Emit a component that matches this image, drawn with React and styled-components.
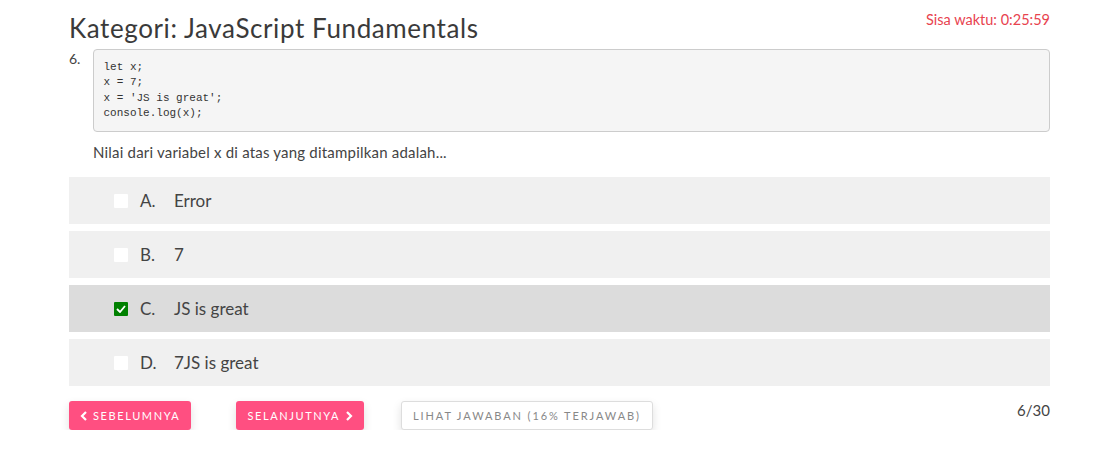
import React from "react";
import styled, { createGlobalStyle } from "styled-components";

const Global = createGlobalStyle`
  body {
    margin: 0;
    background: #fff;
    font-family: "Lato", "Noto Sans", sans-serif;
    color: #444;
  }
`;

const Page = styled.div`
  width: 981px;
  margin-left: 69px;
  padding-top: 10px;
`;

const Header = styled.div`
  display: flex;
  justify-content: space-between;
  align-items: flex-start;
  height: 39px;
`;

const Title = styled.h1`
  margin: 0;
  font-size: 26px;
  font-weight: 400;
  letter-spacing: 0.6px;
  color: #3a3a3a;
  line-height: 36px;
`;

const Timer = styled.div`
  color: #e8434f;
  font-size: 14.5px;
  margin-top: 1px;
`;

const QuestionRow = styled.div`
  display: grid;
  grid-template-columns: 24px 1fr;
`;

const Number = styled.div`
  font-size: 14px;
  padding-top: 1px;
  color: #444;
`;

const Code = styled.pre`
  margin: 0;
  padding: 9.5px;
  background: #f5f5f5;
  border: 1px solid #ccc;
  border-radius: 4px;
  font-family: "Liberation Mono", monospace;
  font-size: 11px;
  line-height: 15.5px;
  color: #333;
`;

const Prompt = styled.p`
  margin: 11px 0 16px;
  font-size: 15px;
  letter-spacing: 0.2px;
  color: #444;
`;

const Options = styled.div`
  display: flex;
  flex-direction: column;
  gap: 7px;
`;

const Option = styled.label`
  display: flex;
  align-items: center;
  height: 47px;
  padding-left: 45px;
  background: ${(p) => (p.$active ? "#dcdcdc" : "#f0f0f0")};
  font-size: 17px;
  color: #444;
`;

const Box = styled.span`
  width: 14px;
  height: 14px;
  border-radius: 1px;
  background: ${(p) => (p.$checked ? "#008000" : "#fff")};
  display: flex;
  align-items: center;
  justify-content: center;
  margin-right: 12px;
`;

const Letter = styled.span`
  width: 34px;
`;

const Footer = styled.div`
  display: flex;
  align-items: flex-start;
  margin-top: 15px;
`;

const Btn = styled.button`
  height: 29px;
  border: ${(p) => (p.$light ? "1px solid #ddd" : "none")};
  border-radius: 3px;
  background: ${(p) => (p.$light ? "#fff" : "#ff4f81")};
  color: ${(p) => (p.$light ? "#888" : "#fff")};
  font-family: "Lato", sans-serif;
  font-size: 11px;
  letter-spacing: ${(p) => (p.$light ? 1.9 : 1.6)}px;
  text-transform: uppercase;
  padding: 0 11px;
  margin-right: ${(p) => p.$gap || 0}px;
  box-shadow: 0 4px 10px rgba(0, 0, 0, 0.12);
  display: flex;
  align-items: center;
  gap: 5px;
`;

const Count = styled.div`
  margin-left: auto;
  font-size: 15px;
  color: #444;
`;

const Chevron = ({ dir }) => (
  <svg width="8" height="10" viewBox="0 0 8 10">
    <path
      d={dir === "left" ? "M6 1 L2 5 L6 9" : "M2 1 L6 5 L2 9"}
      stroke="#fff"
      strokeWidth="2.2"
      fill="none"
    />
  </svg>
);

const options = [
  { k: "A.", t: "Error" },
  { k: "B.", t: "7" },
  { k: "C.", t: "JS is great", on: true },
  { k: "D.", t: "7JS is great" },
];

export default function App() {
  return (
    <Page>
      <Global />
      <Header>
        <Title>Kategori: JavaScript Fundamentals</Title>
        <Timer>Sisa waktu: 0:25:59</Timer>
      </Header>
      <QuestionRow>
        <Number>6.</Number>
        <div>
          <Code>{`let x;
x = 7;
x = 'JS is great';
console.log(x);`}</Code>
          <Prompt>Nilai dari variabel x di atas yang ditampilkan adalah...</Prompt>
        </div>
      </QuestionRow>
      <Options>
        {options.map((o) => (
          <Option key={o.k} $active={o.on}>
            <Box $checked={o.on}>
              {o.on && (
                <svg width="10" height="8" viewBox="0 0 10 8">
                  <path d="M1 4 L4 7 L9 1" stroke="#fff" strokeWidth="1.8" fill="none" />
                </svg>
              )}
            </Box>
            <Letter>{o.k}</Letter>
            {o.t}
          </Option>
        ))}
      </Options>
      <Footer>
        <Btn $gap={45}>
          <Chevron dir="left" /> Sebelumnya
        </Btn>
        <Btn $gap={37}>
          Selanjutnya <Chevron dir="right" />
        </Btn>
        <Btn $light>Lihat Jawaban (16% terjawab)</Btn>
        <Count>6/30</Count>
      </Footer>
    </Page>
  );
}
